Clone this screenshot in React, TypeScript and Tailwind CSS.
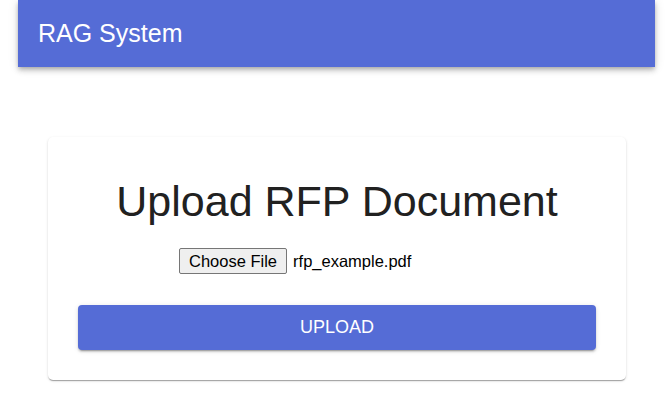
import React from "react";

export default function App() {
  return (
    <div className="min-h-[406px] w-full bg-white pl-[18px] pr-[16px]" style={{ fontFamily: '"Liberation Sans", Arial, sans-serif' }}>
      <header className="flex h-[67px] items-center bg-[#556cd6] px-5 shadow-[0_2px_4px_-1px_rgba(0,0,0,0.2),0_4px_5px_0_rgba(0,0,0,0.14),0_1px_10px_0_rgba(0,0,0,0.12)]">
        <h1 className="text-[25px] leading-none text-white">RAG System</h1>
      </header>
      <main className="ml-[30px] mr-[29px] mt-[70px]">
        <div className="flex flex-col items-center rounded-[5px] bg-white px-[30px] pb-[30px] pt-[38px] shadow-[0_2px_1px_-1px_rgba(0,0,0,0.2),0_1px_1px_0_rgba(0,0,0,0.14),0_1px_3px_0_rgba(0,0,0,0.12)]">
          <h2 className="text-[43px] leading-[52px] text-[#212121]">Upload RFP Document</h2>
          <div className="mt-[21px] flex items-center self-start pl-[101px] text-[16.5px] text-black">
            <span className="flex h-[26px] items-center rounded-[2px] border border-[#767676] bg-[#efefef] px-[9px] leading-none">Choose File</span>
            <span className="ml-[6px]">rfp_example.pdf</span>
          </div>
          <button className="mt-[31px] flex h-[45px] w-full items-center justify-center rounded-[4px] bg-[#556cd6] text-[18px] uppercase text-white shadow-[0_3px_1px_-2px_rgba(0,0,0,0.2),0_2px_2px_0_rgba(0,0,0,0.14),0_1px_5px_0_rgba(0,0,0,0.12)]">
            Upload
          </button>
        </div>
      </main>
    </div>
  );
}
